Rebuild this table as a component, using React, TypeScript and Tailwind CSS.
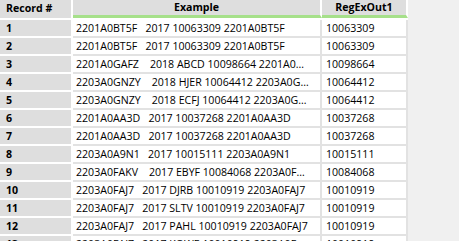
const rows: [string, string][] = [
  ["2201A0BT5F   2017 10063309 2201A0BT5F", "10063309"],
  ["2201A0BT5F   2017 10063309 2201A0BT5F", "10063309"],
  ["2201A0GAFZ    2018 ABCD 10098664 2201A0GAFZ", "10098664"],
  ["2203A0GNZY    2018 HJER 10064412 2203A0GNZY", "10064412"],
  ["2203A0GNZY    2018 ECFJ 10064412 2203A0GNZY", "10064412"],
  ["2201A0AA3D   2017 10037268 2201A0AA3D", "10037268"],
  ["2201A0AA3D   2017 10037268 2201A0AA3D", "10037268"],
  ["2203A0A9N1   2017 10015111 2203A0A9N1", "10015111"],
  ["2203A0FAKV    2017 EBYF 10084068 2203A0FAKV", "10084068"],
  ["2203A0FAJ7   2017 DJRB 10010919 2203A0FAJ7", "10010919"],
  ["2203A0FAJ7   2017 SLTV 10010919 2203A0FAJ7", "10010919"],
  ["2203A0FAJ7   2017 PAHL 10010919 2203A0FAJ7", "10010919"],
  ["2203A0FAJ7   2017 KQWE 10010919 2203A0FAJ7", "10010919"],
];

export default function App() {
  return (
    <div
      className="w-[459px] h-[241px] overflow-hidden bg-[#f0f0f0] text-[10.6px] text-black"
      style={{ fontFamily: '"Open Sans", "Noto Sans", sans-serif' }}
    >
      <div className="w-[408px] bg-white">
        {/* header */}
        <div className="flex h-[20px] border-b-2 border-white">
          <div className="w-[73px] bg-[#dedede] border-r-2 border-white pl-[6px] font-bold leading-[17px]">
            Record #
          </div>
          <div className="w-[249px] bg-[#dedede] border-r-2 border-white border-b-[3px] border-b-[#a6e08a] text-center font-bold leading-[15px]">
            Example
          </div>
          <div className="w-[86px] bg-[#dedede] border-r-2 border-white border-b-[3px] border-b-[#a6e08a] text-center font-bold leading-[15px]">
            RegExOut1
          </div>
        </div>
        {rows.map(([ex, out], i) => (
          <div key={i} className="flex h-[18px]">
            <div className="w-[73px] bg-[#dedede] border-r-2 border-b-2 border-white pl-[6px] font-bold leading-[16px]">
              {i + 1}
            </div>
            <div className="w-[249px] border-r-2 border-b-2 border-[#e2e2e2] pl-[3px] pr-[10px] leading-[16px] whitespace-pre overflow-hidden text-ellipsis">
              {ex}
            </div>
            <div className="w-[86px] border-r-2 border-b-2 border-[#e2e2e2] pl-[4px] leading-[16px]">
              {out}
            </div>
          </div>
        ))}
      </div>
    </div>
  );
}
